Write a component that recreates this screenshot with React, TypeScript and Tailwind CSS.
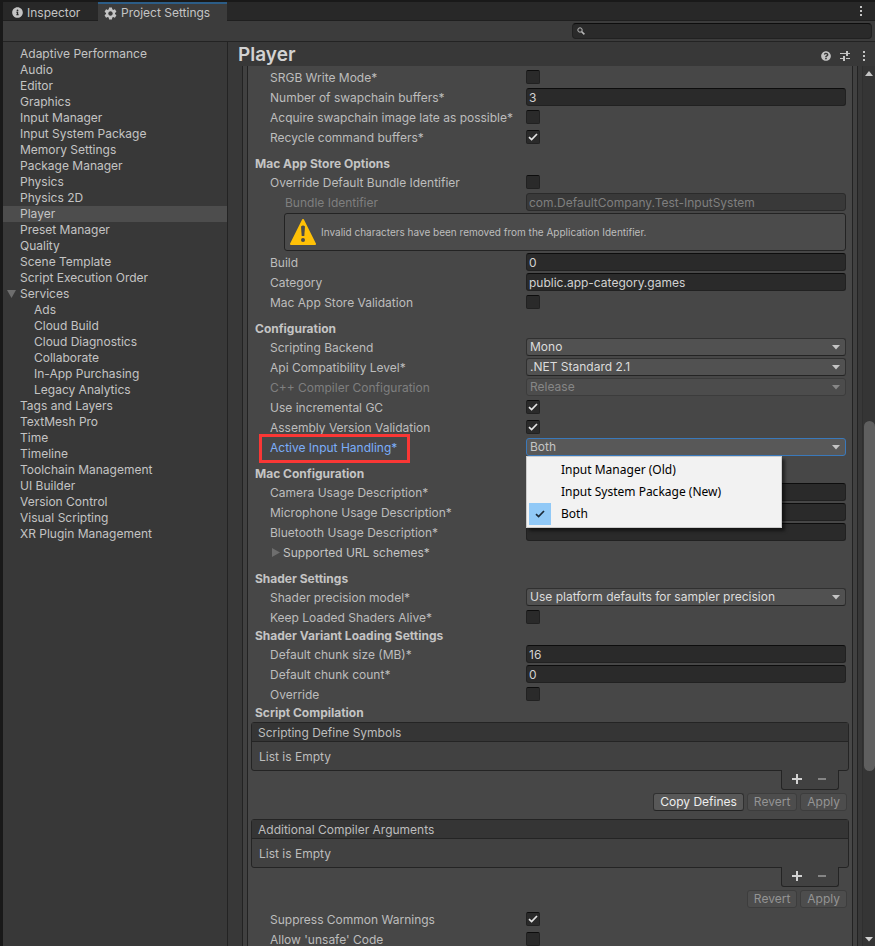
import React, { useId, useState } from "react";
import { FaInfoCircle, FaQuestionCircle } from "react-icons/fa";
import { MdSettings } from "react-icons/md";

type NavItem = { name: string; nested?: boolean; open?: boolean };

const NAV: NavItem[] = [
  { name: "Adaptive Performance" },
  { name: "Audio" },
  { name: "Editor" },
  { name: "Graphics" },
  { name: "Input Manager" },
  { name: "Input System Package" },
  { name: "Memory Settings" },
  { name: "Package Manager" },
  { name: "Physics" },
  { name: "Physics 2D" },
  { name: "Player" },
  { name: "Preset Manager" },
  { name: "Quality" },
  { name: "Scene Template" },
  { name: "Script Execution Order" },
  { name: "Services", open: true },
  { name: "Ads", nested: true },
  { name: "Cloud Build", nested: true },
  { name: "Cloud Diagnostics", nested: true },
  { name: "Collaborate", nested: true },
  { name: "In-App Purchasing", nested: true },
  { name: "Legacy Analytics", nested: true },
  { name: "Tags and Layers" },
  { name: "TextMesh Pro" },
  { name: "Time" },
  { name: "Timeline" },
  { name: "Toolchain Management" },
  { name: "UI Builder" },
  { name: "Version Control" },
  { name: "Visual Scripting" },
  { name: "XR Plugin Management" },
];

function Dots() {
  return (
    <svg width="2" height="10" viewBox="0 0 2 10" fill="#c4c4c4" aria-hidden="true">
      <rect y="0" width="2" height="2" />
      <rect y="4" width="2" height="2" />
      <rect y="8" width="2" height="2" />
    </svg>
  );
}

function Tick({ className }: { className: string }) {
  return (
    <svg viewBox="0 0 10 8" className={className} fill="none" stroke="currentColor" aria-hidden="true">
      <path d="M1 4.2 3.6 6.6 9 1" strokeWidth="1.7" />
    </svg>
  );
}

function Row({
  label,
  htmlFor,
  tone = "text-[#bdbdbd]",
  indent = "pl-[15px]",
  marked,
  children,
}: {
  label: string;
  htmlFor: string;
  tone?: string;
  indent?: string;
  marked?: boolean;
  children: React.ReactNode;
}) {
  return (
    <div className="mb-0.5 grid h-[18px] grid-cols-[271px_minmax(0,1fr)]">
      <div className={`relative ${indent}`}>
        <label htmlFor={htmlFor} className={`block whitespace-nowrap leading-5 ${tone}`}>
          {label}
        </label>
        {marked && (
          <span className="pointer-events-none absolute -top-1 left-1 h-[29px] w-[151px] border-3 border-[#fa3735]" />
        )}
      </div>
      {children}
    </div>
  );
}

function TextRow({
  label,
  value = "",
  disabled,
  indent,
}: {
  label: string;
  value?: string;
  disabled?: boolean;
  indent?: string;
}) {
  const id = useId();
  return (
    <Row label={label} htmlFor={id} indent={indent} tone={disabled ? "text-[#7f7f7f]" : undefined}>
      <input
        id={id}
        type="text"
        defaultValue={value}
        disabled={disabled}
        className="h-[18px] w-full rounded-[3px] border border-[#212121] border-t-[#0d0d0d] bg-[#2a2a2a] px-0.5 pt-px leading-4 text-[#d2d2d2] outline-none disabled:border-[#2b2b2b] disabled:bg-[#393939] disabled:text-[#7f7f7f]"
      />
    </Row>
  );
}

function CheckRow({ label, checked = false }: { label: string; checked?: boolean }) {
  const id = useId();
  const [on, setOn] = useState(checked);
  return (
    <Row label={label} htmlFor={id}>
      <span className="relative mt-0.5 block size-3.5">
        <input
          id={id}
          type="checkbox"
          checked={on}
          onChange={(e) => setOn(e.target.checked)}
          className="block size-3.5 appearance-none rounded-[2px] border border-[#212121] border-t-[#0d0d0d] bg-[#2a2a2a]"
        />
        {on && <Tick className="pointer-events-none absolute left-[2px] top-[3px] h-2 w-2.5 text-[#e4e4e4]" />}
      </span>
    </Row>
  );
}

function SelectRow({
  label,
  value,
  disabled,
  focused,
  children,
}: {
  label: string;
  value: string;
  disabled?: boolean;
  focused?: boolean;
  children?: React.ReactNode;
}) {
  const id = useId();
  const look = focused
    ? "border-[#3a79bb] bg-[#585858] text-[#c4c4c4]"
    : disabled
      ? "border-[#3c3c3c] bg-[#4c4c4c] text-[#868686]"
      : "border-[#303030] border-b-[#242424] bg-[#515151] text-[#dcdcdc]";
  return (
    <Row
      label={label}
      htmlFor={id}
      marked={focused}
      tone={focused ? "text-[#7baefa]" : disabled ? "text-[#7f7f7f]" : undefined}
    >
      <div className="relative">
        <select
          id={id}
          disabled={disabled}
          defaultValue={value}
          className={`block h-[18px] w-full appearance-none rounded-[3px] border pl-[3px] pr-5 leading-4 opacity-100 outline-none ${look}`}
        >
          <option>{value}</option>
        </select>
        <svg
          viewBox="0 0 8 5"
          className={`pointer-events-none absolute right-[6px] top-[7px] h-[5px] w-2 ${disabled ? "text-[#868686]" : "text-[#c4c4c4]"}`}
          fill="currentColor"
          aria-hidden="true"
        >
          <path d="M0 0h8L4 4.6z" />
        </svg>
        {children}
      </div>
    </Row>
  );
}

function Heading({ children, tight }: { children: string; tight?: boolean }) {
  return (
    <h2
      className={`whitespace-nowrap font-bold text-[#c4c4c4] ${tight ? "h-[17px] leading-4" : "mt-[9px] h-[18px] leading-[18px]"}`}
    >
      {children}
    </h2>
  );
}

function ListBox({ title }: { title: string }) {
  return (
    <section className="-ml-1 -mr-[3px]">
      <div className="rounded-[3px] border border-[#242424] bg-[#414141]">
        <h3 className="h-[19px] border-b border-[#242424] bg-[#353535] pl-1.5 leading-5 text-[#bdbdbd]">{title}</h3>
        <p className="h-7 pl-[7px] leading-[30px] text-[#bdbdbd]">List is Empty</p>
      </div>
      <div className="relative -mt-px mr-2.5 ml-auto flex h-5 w-[58px] items-center justify-between rounded-b-[3px] border border-t-0 border-[#242424] bg-[#414141] pb-0.5 pl-2.5 pr-[11px]">
        <button type="button" aria-label={`Add to ${title}`} className="text-[#d2d2d2]">
          <svg className="block" width="10" height="10" viewBox="0 0 10 10" fill="currentColor">
            <path d="M4 0h2v4h4v2H6v4H4V6H0V4h4z" />
          </svg>
        </button>
        <button type="button" disabled aria-label={`Remove from ${title}`} className="text-[#858585]">
          <svg className="block" width="10" height="10" viewBox="0 0 10 10" fill="currentColor">
            <path d="M1 4h8v2H1z" />
          </svg>
        </button>
      </div>
    </section>
  );
}

function PushButton({ children, disabled }: { children: string; disabled?: boolean }) {
  return (
    <button
      type="button"
      disabled={disabled}
      className="h-[18px] rounded-[3px] border border-[#303030] border-b-[#242424] bg-[#585858] px-1.5 leading-4 text-[#eeeeee] disabled:border-[#3d3d3d] disabled:bg-[#4d4d4d] disabled:text-[#949494]"
    >
      {children}
    </button>
  );
}

const HANDLERS = ["Input Manager (Old)", "Input System Package (New)", "Both"];

export default function App() {
  return (
    <div className="flex h-screen flex-col overflow-hidden border-t-2 border-[#191919] bg-[#383838] font-['Inter',sans-serif] text-[12px] text-[#c4c4c4]">
      <div className="flex min-h-0 flex-1 flex-col border-l-3 border-[#191919]">
        <header className="flex h-[19px] shrink-0 items-stretch border-b border-[#1f1f1f] bg-[#282828]">
          <button type="button" className="flex w-[95px] items-center gap-1 pl-[9px] pt-[3px] leading-4">
            <FaInfoCircle size={11} />
            <span>Inspector</span>
          </button>
          <button
            type="button"
            className="-mb-px flex w-[129px] items-center gap-[3px] border-t-2 border-[#2c5d87] bg-[#3c3c3c] pl-[5px] pt-px leading-4"
          >
            <MdSettings size={15} />
            <span className="whitespace-nowrap">Project Settings</span>
          </button>
          <button type="button" aria-label="Window menu" className="ml-auto pr-[13px]">
            <Dots />
          </button>
        </header>

        <div className="flex h-[21px] shrink-0 items-center justify-end border-b border-[#232323] bg-[#3c3c3c] pr-[3px]">
          <label className="flex h-4 w-[300px] items-center rounded-[4px] border border-[#212121] border-t-[#0d0d0d] bg-[#2a2a2a] pl-1">
            <svg width="8" height="8" viewBox="0 0 8 8" fill="none" stroke="#b8b8b8" aria-hidden="true">
              <circle cx="3" cy="3" r="2.2" />
              <path d="M4.6 4.6 7.4 7.4" strokeWidth="1.5" />
            </svg>
            <input type="search" aria-label="Search settings" className="min-w-0 flex-1 bg-transparent px-1 outline-none" />
          </label>
        </div>

        <div className="flex min-h-0 flex-1">
          <nav className="w-[225px] shrink-0 border-r border-[#232323] pt-1">
            {NAV.map((item) => (
              <a
                key={item.name}
                href="#"
                className={`flex h-4 items-center leading-4 ${item.nested ? "pl-[31px]" : item.open ? "pl-1" : "pl-[17px]"} ${item.name === "Player" ? "bg-[#4d4d4d]" : ""}`}
              >
                {item.open && (
                  <svg className="mr-1" width="9" height="8" viewBox="0 0 9 8" fill="#6e6e6e" aria-hidden="true">
                    <path d="M0 0h9L4.500 8z" />
                  </svg>
                )}
                {item.name}
              </a>
            ))}
          </nav>

          <main className="flex min-w-0 flex-1 flex-col">
            <div className="flex h-6 shrink-0 items-center pl-2.5 pr-2.5">
              <h1 className="pt-0.5 text-[19px] font-semibold leading-6 text-[#d2d2d2]">Player</h1>
              <div className="ml-auto flex items-center gap-[9px] pt-1">
                <button type="button" aria-label="Help">
                  <FaQuestionCircle size={10} />
                </button>
                <button type="button" aria-label="Presets">
                  <svg className="block" width="10" height="10" viewBox="0 0 10 10" fill="#c4c4c4">
                    <path d="M0 2h6V0h2v2h2v1H8v2H6V3H0zM0 7h3V5h2v5H3V8H0zM6 7h4v1H6z" />
                  </svg>
                </button>
                <button type="button" aria-label="More options" className="pl-1">
                  <Dots />
                </button>
              </div>
            </div>

            <div className="flex min-h-0 flex-1">
              <div className="ml-3.5 mr-1 min-w-0 flex-1 overflow-hidden border-x border-[#232323] bg-[#414141] px-1">
                <div className="border-x border-[#232323] bg-[#474747] pb-4 pl-[7px] pr-1.5 pt-0.5">
                  <CheckRow label="SRGB Write Mode*" />
                  <TextRow label="Number of swapchain buffers*" value="3" />
                  <CheckRow label="Acquire swapchain image late as possible*" />
                  <CheckRow label="Recycle command buffers*" checked />

                  <Heading>Mac App Store Options</Heading>
                  <CheckRow label="Override Default Bundle Identifier" />
                  <TextRow
                    label="Bundle Identifier"
                    value="com.DefaultCompany.Test-InputSystem"
                    disabled
                    indent="pl-[30px]"
                  />
                  <div
                    role="alert"
                    className="mb-0.5 ml-[29px] flex h-[38px] items-center gap-[5px] rounded-[3px] border border-[#232323] bg-[#4b4b4b] pl-[5px] text-[10px] text-[#bdbdbd]"
                  >
                    <svg width="26" height="26" viewBox="0 0 26 26" aria-hidden="true">
                      <path d="M13 1 25 25H1z" fill="#ffc107" stroke="#ffc107" strokeWidth="2" strokeLinejoin="round" />
                      <path d="M11 7.500Q13 5.500 15 7.500L14.300 17h-2.600z" fill="#4b4b4b" />
                      <circle cx="13" cy="21" r="2" fill="#4b4b4b" />
                    </svg>
                    Invalid characters have been removed from the Application Identifier.
                  </div>
                  <TextRow label="Build" value="0" />
                  <TextRow label="Category" value="public.app-category.games" />
                  <CheckRow label="Mac App Store Validation" />

                  <Heading>Configuration</Heading>
                  <SelectRow label="Scripting Backend" value="Mono" />
                  <SelectRow label="Api Compatibility Level*" value=".NET Standard 2.1" />
                  <SelectRow label="C++ Compiler Configuration" value="Release" disabled />
                  <CheckRow label="Use incremental GC" checked />
                  <CheckRow label="Assembly Version Validation" checked />
                  <SelectRow label="Active Input Handling*" value="Both" focused>
                    <ul
                      role="listbox"
                      aria-label="Active Input Handling"
                      className="absolute left-0 top-[18px] z-10 w-64 border border-[#cccccc] bg-[#f2f2f2] p-0.5 font-['Noto_Sans',sans-serif] text-[12px] text-black shadow-[3px_3px_3px_rgba(0,0,0,0.5)]"
                    >
                      {HANDLERS.map((name) => (
                        <li key={name} role="option" aria-selected={name === "Both"} className="flex h-[22px] items-center">
                          <span
                            className={`mr-2.5 flex size-[22px] items-center justify-center ${name === "Both" ? "bg-[#91c9f7]" : ""}`}
                          >
                            {name === "Both" && <Tick className="h-2 w-2.5 text-[#1b2a38]" />}
                          </span>
                          {name}
                        </li>
                      ))}
                    </ul>
                  </SelectRow>

                  <Heading>Mac Configuration</Heading>
                  <TextRow label="Camera Usage Description*" />
                  <TextRow label="Microphone Usage Description*" />
                  <TextRow label="Bluetooth Usage Description*" />
                  <button
                    type="button"
                    aria-expanded="false"
                    className="mb-0.5 ml-[17px] flex h-[18px] items-center gap-[3px] leading-5"
                  >
                    <svg width="8" height="9" viewBox="0 0 8 9" fill="#6e6e6e" aria-hidden="true">
                      <path d="M0 0v9l8-4.500z" />
                    </svg>
                    <span className="h-[18px]">Supported URL schemes*</span>
                  </button>

                  <Heading>Shader Settings</Heading>
                  <SelectRow label="Shader precision model*" value="Use platform defaults for sampler precision" />
                  <CheckRow label="Keep Loaded Shaders Alive*" />

                  <Heading tight>Shader Variant Loading Settings</Heading>
                  <TextRow label="Default chunk size (MB)*" value="16" />
                  <TextRow label="Default chunk count*" value="0" />
                  <CheckRow label="Override" />

                  <Heading tight>Script Compilation</Heading>
                  <ListBox title="Scripting Define Symbols" />
                  <div className="-mr-px mb-2 mt-[3px] flex justify-end gap-[3px]">
                    <PushButton>Copy Defines</PushButton>
                    <PushButton disabled>Revert</PushButton>
                    <PushButton disabled>Apply</PushButton>
                  </div>
                  <ListBox title="Additional Compiler Arguments" />
                  <div className="-mr-px mb-0.5 mt-[3px] flex justify-end gap-[3px]">
                    <PushButton disabled>Revert</PushButton>
                    <PushButton disabled>Apply</PushButton>
                  </div>
                  <CheckRow label="Suppress Common Warnings" checked />
                  <CheckRow label="Allow 'unsafe' Code" />
                </div>
              </div>

              <div className="flex w-[13px] shrink-0 flex-col items-center border-l border-[#2f2f2f] bg-[#353535] pb-1 pt-[5px]">
                <svg width="8" height="5" viewBox="0 0 8 5" fill="#c4c4c4" aria-hidden="true">
                  <path d="M0 5h8L4 0z" />
                </svg>
                <div className="flex w-full min-h-0 flex-1 flex-col items-end">
                  <div className="grow-[345]" />
                  <div className="w-[11px] grow-[350] rounded-full bg-[#5f5f5f]" />
                  <div className="grow-[166]" />
                </div>
                <svg width="8" height="5" viewBox="0 0 8 5" fill="#d2d2d2" aria-hidden="true">
                  <path d="M0 0h8L4 4.500z" />
                </svg>
              </div>
            </div>
          </main>
        </div>
      </div>
    </div>
  );
}
